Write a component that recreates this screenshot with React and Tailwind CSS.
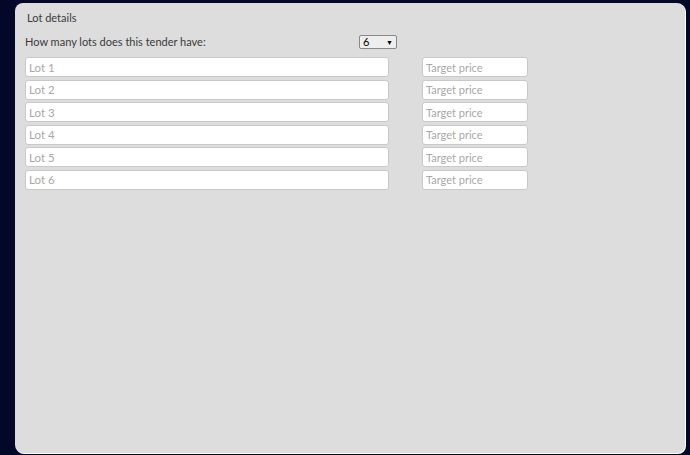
import { useState } from "react";

const lots = [1, 2, 3, 4, 5, 6];

function LotRow({ n }) {
  return (
    <div className="flex items-center h-[20px]">
      <input
        className="w-[364px] h-[20px] bg-white border border-[#c9c9c9] rounded-[3px] px-[3px] text-[11.5px] text-[#555] placeholder:text-[#a8a8a8] outline-none"
        style={{ fontFamily: "Lato, 'Open Sans', sans-serif" }}
        placeholder={`Lot ${n}`}
      />
      <input
        className="ml-[33px] w-[106px] h-[20px] bg-white border border-[#c9c9c9] rounded-[3px] px-[3px] text-[11px] text-[#555] placeholder:text-[#a8a8a8] outline-none"
        style={{ fontFamily: "Lato, 'Open Sans', sans-serif" }}
        placeholder="Target price"
      />
    </div>
  );
}

export default function App() {
  const [count] = useState(6);

  return (
    <div className="w-full h-[455px] bg-[#030829] pl-[15px] pr-[5px] pt-[3px] pb-[2px] flex">
      <div className="flex-1 rounded-[8px] bg-[#dddddd] shadow-[1px_1px_0_#ffffff] pl-[10px] pt-[7px] font-['Lato','Open_Sans',sans-serif] text-[#3a3a3a]">
        {/* Header */}
        <p className="text-[11px] leading-[16px] pl-[2px]">Lot details</p>

        {/* Lot count */}
        <div className="flex items-center mt-[9px] h-[14px]">
          <p className="w-[334px] text-[11px] leading-[14px]">How many lots does this tender have:</p>
          <div className="w-[38px] h-[14px] flex items-center justify-between border border-[#888] rounded-[2px] bg-[#eeeeee] px-[3px] text-[11px] text-black">
            <span>{count}</span>
            <span className="text-[7px]">▼</span>
          </div>
        </div>

        {/* Lots */}
        <div className="flex flex-col gap-[2.6px] mt-[8px]">
          {lots.map((n) => (
            <LotRow key={n} n={n} />
          ))}
        </div>
      </div>
    </div>
  );
}
